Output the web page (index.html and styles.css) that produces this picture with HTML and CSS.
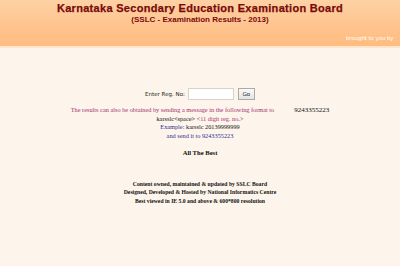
FILE: index.html
```html
<!DOCTYPE html>
<html>
<head>
<meta charset="utf-8">
<link rel="stylesheet" href="styles.css">
</head>
<body>
<div class="header">
  <div class="title">Karnataka Secondary Education Examination Board</div>
  <div class="subtitle">(SSLC - Examination Results - 2013)</div>
  <div class="brought">brought to you by</div>
</div>
<div class="main">
  <div class="form">
    <span class="label">Enter Reg. No:</span>
    <span class="input"></span>
    <span class="btn">Go</span>
  </div>
  <div class="sms">
    <div class="line first"><span class="mag">The results can also be obtained by sending a message in the following format to</span><span class="blk num">9243355223</span></div>
    <div class="line"><span class="blk">karsslc&lt;space&gt;</span> <span class="mag">&lt;11 digit reg. no.&gt;</span></div>
    <div class="line"><span class="navy">Example:</span> <span class="blk">karsslc 20139999999</span></div>
    <div class="line navy">and send it to 9243355223</div>
  </div>
  <div class="best">All The Best</div>
  <div class="footer">
    <div>Content owned, maintained &amp; updated by SSLC Board</div>
    <div>Designed, Developed &amp; Hosted by National Informatics Centre</div>
    <div>Best viewed in IE 5.0 and above &amp; 600*800 resolution</div>
  </div>
</div>
</body>
</html>
```
FILE: styles.css
```css
html, body {
  margin: 0;
  padding: 0;
  background: #fdf5eb;
  height: 266px;
  overflow: hidden;
}
.header {
  height: 46px;
  background: linear-gradient(#fdd2a4, #ffc38e 60%, #ffbc80);
  border-bottom: 2px solid #fde6cc;
  display: flex;
  flex-direction: column;
  align-items: center;
  overflow: hidden;
}
.title {
  font-family: "Liberation Sans", Arial, sans-serif;
  font-weight: bold;
  font-size: 11px;
  color: #7a0a0a;
  line-height: 12px;
  margin-top: 2px;
  letter-spacing: 0.3px;
  -webkit-text-stroke: 0.25px #7a0a0a;
}
.subtitle {
  font-family: "Liberation Sans", Arial, sans-serif;
  font-weight: bold;
  font-size: 8px;
  line-height: 9px;
  color: #7a0a0a;
  margin-top: 1px;
}
.brought {
  align-self: stretch;
  padding-left: 346px;
  white-space: nowrap;
  font-family: "DejaVu Sans", Verdana, sans-serif;
  font-size: 5.3px;
  color: #ffffff;
  margin-top: 11px;
}
.main {
  display: flex;
  flex-direction: column;
  align-items: center;
  font-family: "Liberation Serif", "Times New Roman", serif;
}
.form {
  margin-top: 40px;
  display: flex;
  align-items: center;
  gap: 3px;
}
.label {
  font-family: "DejaVu Sans", Verdana, sans-serif;
  font-size: 5.5px;
  color: #222;
}
.input {
  width: 46px;
  height: 12px;
  background: #ffffff;
  border: 1px solid #d8d2cc;
  box-sizing: border-box;
}
.btn {
  font-family: "DejaVu Sans", Verdana, sans-serif;
  font-size: 5.5px;
  color: #222;
  width: 17px;
  height: 12px;
  box-sizing: border-box;
  border: 1px solid #aaa;
  background: linear-gradient(#fafafa, #e4e4e4);
  display: flex;
  align-items: center;
  justify-content: center;
  margin-left: 1px;
}
.sms {
  margin-top: 6px;
  display: flex;
  flex-direction: column;
  align-items: center;
  font-size: 6.3px;
  line-height: 8.7px;
}
.line { white-space: nowrap; }
.first {
  display: flex;
  gap: 20px;
}
.num { font-size: 7px; }
.mag { color: #a3306f; }
.blk { color: #111; }
.navy { color: #2e2e90; }
.best {
  margin-top: 8px;
  font-weight: bold;
  font-size: 6.6px;
  color: #111;
}
.footer {
  margin-top: 24px;
  display: flex;
  flex-direction: column;
  align-items: center;
  font-weight: bold;
  font-size: 5.7px;
  line-height: 8.5px;
  color: #111;
}
```
